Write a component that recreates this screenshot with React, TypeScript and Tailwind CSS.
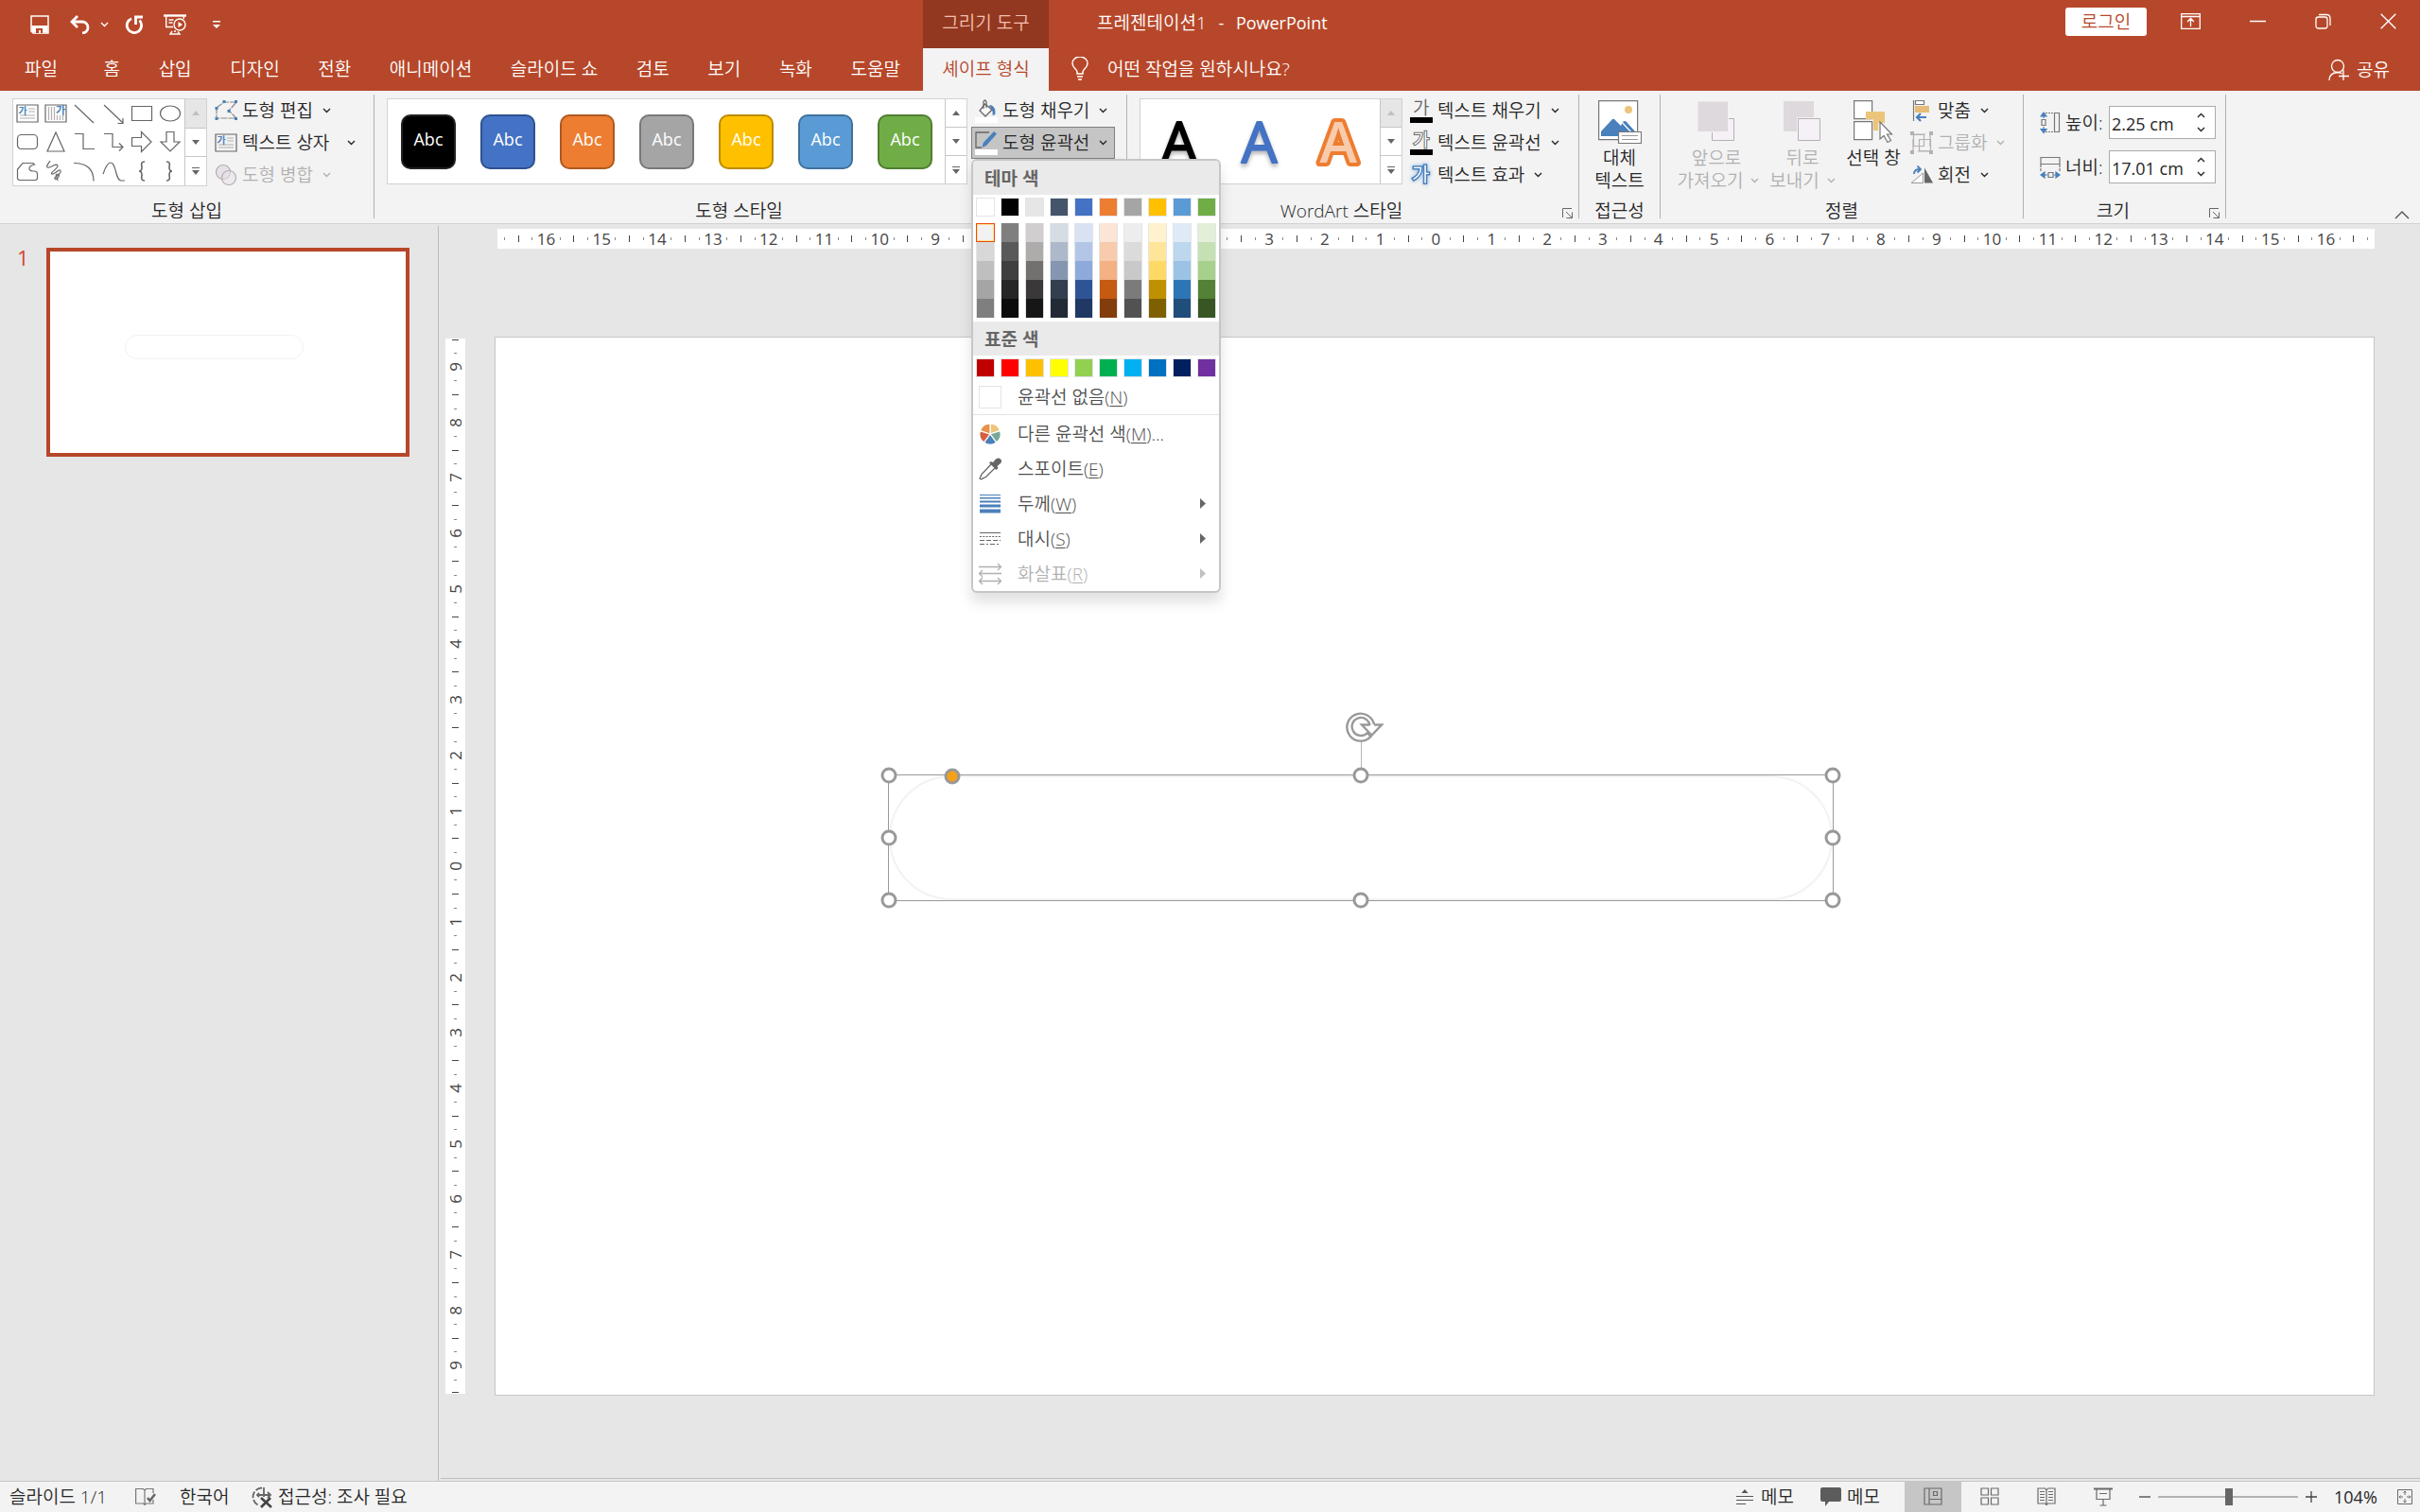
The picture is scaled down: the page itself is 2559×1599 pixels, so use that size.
import React from 'react';
import clsx from 'clsx';

type IconProps = { className?: string };

const Chevron: React.FC<IconProps> = ({ className }) => (
  <svg viewBox="0 0 9 6" className={clsx('h-[6px] w-[9px] shrink-0', className)} fill="none" stroke="currentColor" strokeWidth="1.4">
    <path d="M1 1l3.500 3.500L8 1" />
  </svg>
);

/* Quick access icons */

const SaveIcon = () => (
  <svg viewBox="0 0 20 20" className="h-5 w-5" fill="none" stroke="currentColor" strokeWidth="1.5">
    <path d="M1 1h18v18H3l-2-2z" />
    <path d="M1.5 11h17v7.5H2.5l-1-1z" fill="currentColor" stroke="none" />
    <path d="M6 14h7v5h-2v-3H9v3H6z" fill="#b7472a" stroke="none" />
  </svg>
);

const UndoIcon = () => (
  <svg viewBox="0 0 22 20" className="h-5 w-[22px]" fill="none" stroke="currentColor" strokeWidth="2.8">
    <path d="M8 1L2 7l6 6" />
    <path d="M2.5 7H13a6 6 0 0 1 0 12" />
  </svg>
);

const RedoIcon = () => (
  <svg viewBox="0 0 20 20" className="h-5 w-5" fill="none" stroke="currentColor" strokeWidth="2.8">
    <path d="M15.500 5.500a7.700 7.700 0 1 1-8.500-1.800" />
    <path d="M11.500 10V2H19" />
  </svg>
);

const StartShowIcon = () => (
  <svg viewBox="0 0 24 22" className="h-[22px] w-6" fill="none" stroke="currentColor" strokeWidth="1.4">
    <path d="M0 1.500h24" strokeWidth="2.400" />
    <path d="M2.700 2v11.500H10M21.300 2v3M5.500 6h5M5.500 9h4M9 18l-2 3h10l-2-2.500M11 18h2" />
    <circle cx="17" cy="11" r="6" />
    <path d="M15.500 8v6l4.500-3z" fill="currentColor" stroke="none" />
  </svg>
);

const CustomizeIcon = () => (
  <svg viewBox="0 0 8 8" className="h-2 w-2" fill="currentColor">
    <path d="M0 0h8v1.500H0zM0 4h8L4 8z" />
  </svg>
);

/* Shape gallery icons, all drawn on a 24px grid */

const shapeIcons: React.ReactNode[] = [
  <>
    <path d="M1 3h22v18H1z" />
    <path d="M13 7h7M13 10h7M4 14h16M4 17h16" stroke="#b0b0b0" />
    <text x="2.500" y="12.500" fontSize="10" fontWeight="700" fill="#4a80bb" stroke="none">가</text>
  </>,
  <>
    <path d="M1 3h22v18H1z" />
    <path d="M4.500 5v14M7.500 5v14M10.500 5v14M13.500 14v5M16.500 14v5M19.500 14v5" stroke="#b0b0b0" />
    <text x="12" y="12.500" fontSize="11" fontWeight="700" fill="#4a80bb" stroke="none">가</text>
  </>,
  <path d="M2 3l20 19" />,
  <path d="M2 3l20 19M22 17v5.500h-5.500" />,
  <path d="M1.500 4.500h21v15h-21z" />,
  <ellipse cx="12" cy="12" rx="10.500" ry="8" />,
  <rect x="1.500" y="4.500" width="21" height="15" rx="4" />,
  <path d="M12 2l9 20H3z" />,
  <path d="M2 3.500h9v16h12" />,
  <path d="M2 3.500h9v14h11M18 13.500l4 4-4 4" />,
  <path d="M1.500 7.500h10v-6L22 12 11.500 22.500v-6h-10z" />,
  <path d="M8 1.500h8V12h6L12 22 2 12h6z" />,
  <path d="M7 3.500h11l1.500 1.500c-7 1-7 7-2 7h2q3 0 3 3v5l-1.500 1.500H3l-1.500-1.500V10z" />,
  <path d="M6 1c-2 3-6 8-1 7s7-5 9-2c1 3-9 8-6 9s8-7 9-3-8 6-6 8 7-5 3-5 0 4 0 7" />,
  <path d="M1 3.500c13 0 21 6 21 19" />,
  <path d="M1 15C4 6 6 3 9 3c6 0 5 19 11 19h4" />,
  <path d="M15 2c-5 0-3 4-3 6s0 4-3 4c3 0 3 2 3 4s-2 6 3 6" strokeWidth="1.600" />,
  <path d="M8 2c5 0 3 4 3 6s0 4 3 4c-3 0-3 2-3 4s2 6-3 6" strokeWidth="1.600" />,
];

/* Ribbon icons */

const EditShapeIcon = () => (
  <svg viewBox="0 0 24 22" className="h-[22px] w-6" fill="none" stroke="#8c8c8c" strokeWidth="1.200">
    <path d="M2 8l8-6h13l-8 9 8 8H2z" strokeDasharray="7 1" />
    <path d="M8.500 0h3v3h-3zM21 0h3v3h-3zM0.500 7h3v3h-3zM13.500 10h3v3h-3zM0.500 18h3v3h-3zM21 18h3v3h-3z" fill="#4a80bb" stroke="none" />
  </svg>
);

const TextBoxIcon = () => (
  <svg viewBox="0 0 24 24" className="h-6 w-6 overflow-visible" fill="none" stroke="#666" strokeWidth="1.200">
    {shapeIcons[0]}
  </svg>
);

const MergeIcon = () => (
  <svg viewBox="0 0 24 24" className="h-6 w-6" fill="#e8e2e8" stroke="#b5adb5" strokeWidth="1.200">
    <circle cx="9" cy="9" r="7.500" />
    <circle cx="15" cy="15" r="7.500" fillOpacity="0.500" />
  </svg>
);

const FillIcon = () => (
  <svg viewBox="0 0 24 26" className="h-[26px] w-6" fill="none" stroke="#666" strokeWidth="1.300">
    <path d="M0 20h24v6H0z" fill="#fff" stroke="none" />
    <path d="M17 7q5 2 4.500 10l-3 1q1-7-4-10z" fill="#4a80bb" stroke="none" />
    <path d="M10.500 6L18 12l-7 7-6-6z" fill="#f8f8f8" />
    <path d="M9 11V3.500q1.500-3 3 0V10" />
  </svg>
);

const OutlineIcon = () => (
  <svg viewBox="0 0 24 26" className="h-[26px] w-6" fill="none" stroke="#666" strokeWidth="1.300">
    <path d="M0 20h24v6H0z" fill="#fff" stroke="none" />
    <path d="M15 2H1v16h6" />
    <path d="M20 1l3 2.500L12 16l-4.500 2 1.200-5z" fill="#4a80bb" stroke="none" />
  </svg>
);

const TextFillIcon = () => (
  <svg viewBox="0 0 24 26" className="h-[26px] w-6 overflow-visible">
    <text x="3" y="17" fontSize="19" fill="#666">가</text>
    <path d="M0 20h24v6H0z" />
  </svg>
);

const TextOutlineIcon = () => (
  <svg viewBox="0 0 24 26" className="h-[26px] w-6 overflow-visible">
    <text x="3" y="17" fontSize="19" fill="#fff" stroke="#666" strokeWidth="2" paintOrder="stroke">가</text>
    <path d="M0 20h24v6H0z" />
  </svg>
);

const TextEffectIcon = () => (
  <svg viewBox="0 0 24 26" className="h-[26px] w-6 overflow-visible">
    <text x="2" y="20" fontSize="20" fill="#fff" stroke="#4a80bb" strokeWidth="3" paintOrder="stroke" className="drop-shadow-[0_0_2px_#8ab4e0]">가</text>
  </svg>
);

const AltTextIcon = () => (
  <svg viewBox="0 0 46 46" className="h-[46px] w-[46px]" fill="#fff" stroke="#777" strokeWidth="1.200">
    <path d="M.6.6h41v41H.6z" />
    <circle cx="32" cy="10" r="4" fill="#ecc57b" stroke="none" />
    <path d="M3 38V33L15 20q1-.5 2 0l7 7 2-4q2-2 4 0l9 10v5z" fill="#4a80bb" stroke="none" />
    <path d="M23 21l12 13" stroke="#fff" />
    <path d="M21.500 33.500h24v12h-24z" />
    <path d="M25 37.500h17M25 41.500h17" stroke="#999" />
  </svg>
);

const BringForwardIcon = () => (
  <svg viewBox="0 0 40 43" className="h-[43px] w-10" fill="#f5f1f7" stroke="#b5b0b5">
    <path d="M15.500 18.500h23v23h-23z" />
    <path d="M0 0h32.500v32.500H0z" fill="#ddd9dd" stroke="#f3f3f3" />
  </svg>
);

const SendBackwardIcon = () => (
  <svg viewBox="0 0 40 43" className="h-[43px] w-10" fill="#f5f1f7" stroke="#b5b0b5">
    <path d="M0 0h32v32H0z" fill="#ddd9dd" stroke="none" />
    <path d="M14 17h26v26H14z" fill="#f3f3f3" stroke="none" />
    <path d="M15.500 18.500h23v23h-23z" />
  </svg>
);

const SelectionPaneIcon = () => (
  <svg viewBox="0 0 42 46" className="h-[46px] w-[42px]" fill="#fff" stroke="#777" strokeWidth="1.200">
    <path d="M.6.6h19v19H.6zM.6 22.600h19v19H.6z" />
    <path d="M13 12h20v12h-7v8h-5V20h-8z" fill="#ecc57b" stroke="none" />
    <path d="M28 23v18l4-3.500 4 7 3.500-2-4-6.500h5z" />
  </svg>
);

const AlignIcon = () => (
  <svg viewBox="0 0 24 24" className="h-6 w-6" fill="none" stroke="#777" strokeWidth="1.200">
    <path d="M3.500 1v22" />
    <path d="M5.500 1.500h9v4h-9z" fill="#fff" />
    <path d="M5 7h15v7H5z" fill="#e6bd78" stroke="none" />
    <path d="M17 19H7M11 15l-4 4 4 4" stroke="#4a80bb" strokeWidth="2.200" />
  </svg>
);

const GroupIcon = () => (
  <svg viewBox="0 0 24 24" className="h-6 w-6" fill="none" stroke="#b5b0b5" strokeWidth="1.200">
    <path d="M3 3h18v18H3z" strokeDasharray="13 5" />
    <path d="M3.500 3.500h11v12h-11zM9.500 8.500h12v12h-12z" />
    <path d="M0 0h4v4H0zM20 0h4v4h-4zM0 20h4v4H0zM20 20h4v4h-4z" fill="#b5b0b5" stroke="none" />
  </svg>
);

const RotateIcon = () => (
  <svg viewBox="0 0 24 20" className="h-5 w-6" fill="none" stroke="#999">
    <path d="M13.500 8v10.500H1z" fill="#fff" />
    <path d="M15 2.500v16h9z" fill="#666" stroke="none" />
    <path d="M4 9q0-5 6-5M7.500.5l3.500 3.500-3.500 3.500" stroke="#4a80bb" strokeWidth="1.800" />
  </svg>
);

const HeightIcon = () => (
  <svg viewBox="0 0 22 24" className="h-6 w-[22px]" fill="none" stroke="#777" strokeWidth="1.200">
    <path d="M15.500 1.500h5v20h-5zM2 8.500h4v6H2z" />
    <path d="M6 1.500h9M6 21.500h9" strokeDasharray="2 1" />
    <path d="M4 7V2M1 5l3-4 3 4zM4 16v5M1 18.500l3 4 3-4z" stroke="#4a80bb" fill="#4a80bb" />
  </svg>
);

const WidthIcon = () => (
  <svg viewBox="0 0 22 24" className="h-6 w-[22px]" fill="none" stroke="#777" strokeWidth="1.200">
    <path d="M1 1.500h20v7H1zM9 17.500h5v5H9z" />
    <path d="M1 9v8M21 9v8" strokeDasharray="3 1" />
    <path d="M8 20H3M5 17l-4 3 4 3zM15 20h4M17 17l4 3-4 3z" stroke="#4a80bb" fill="#4a80bb" />
  </svg>
);

const LauncherIcon = () => (
  <svg viewBox="0 0 11 11" className="h-[11px] w-[11px]" fill="none" stroke="#666">
    <path d="M.5 10V.5H10M4 4l6 6M10.500 4.500v6h-6" />
  </svg>
);

/* Outline menu icons */

const MoreColorsIcon = () => (
  <svg viewBox="-12 -12 24 24" className="h-6 w-6" stroke="#fff" strokeWidth="1.200">
    <path d="M0 0V-11A11 11 0 0 1 10.500-3.400z" fill="#ecc57b" />
    <path d="M0 0L10.500-3.400A11 11 0 0 1 6.500 8.900z" fill="#76a797" />
    <path d="M0 0L6.500 8.900A11 11 0 0 1-6.500 8.900z" fill="#4a80bb" />
    <path d="M0 0L-6.500 8.900A11 11 0 0 1-10.500-3.400z" fill="#d65f41" />
    <path d="M0 0L-10.500-3.400A11 11 0 0 1 0-11z" fill="#e8924a" />
  </svg>
);

const EyedropperIcon = () => (
  <svg viewBox="0 0 24 24" className="h-6 w-6" fill="none" stroke="#666" strokeWidth="1.300">
    <path d="M13 7L3 17.500Q2 20 1 22q1 1.500 3 0 2-.5 4-2L17.500 10.500" />
    <path d="M11 5.500l2-1.500 2 1 3-3.500q3-2 5 0t0 4.500L19.500 9l1 2-2 2z" fill="#666" stroke="none" />
  </svg>
);

const WeightIcon = () => (
  <svg viewBox="0 0 24 24" className="h-6 w-6" fill="#4a80bb">
    <path d="M1 2h22v1H1zM1 5h22v1.500H1zM1 8.500h22v2H1zM1 12.500h22v3H1zM1 17.500h22v4H1z" />
  </svg>
);

const DashIcon = () => (
  <svg viewBox="0 0 24 24" className="h-6 w-6" stroke="#666">
    <path d="M1 5.500h22" />
    <path d="M1 9.500h22" strokeDasharray="2 1.300" />
    <path d="M1 13.500h22" strokeDasharray="5 2" />
    <path d="M1 17.500h22" strokeDasharray="5 2 2 2" />
  </svg>
);

const ArrowsIcon = () => (
  <svg viewBox="0 0 24 24" className="h-6 w-6" fill="none" stroke="#b0b0b0" strokeWidth="1.300">
    <path d="M0 4.500h23M20 1l3.500 3.500L20 8M24 11.500H1M4 8L.5 11.500 4 15M1 19.500h22M4 16L.5 19.500 4 23M20 16l3.500 3.500L20 23" />
  </svg>
);

const NoOutlineIcon = () => <span className="block h-6 w-6 border border-[#e2e4e7] bg-white" />;

const tabs = ['홈', '삽입', '디자인', '전환', '애니메이션', '슬라이드 쇼', '검토', '보기', '녹화', '도움말'];

const shapeStyles = [
  'bg-black border-[#222222]',
  'bg-[#4472c4] border-[#2f528f]',
  'bg-[#ed7d31] border-[#ae5a21]',
  'bg-[#a5a5a5] border-[#787878]',
  'bg-[#ffc000] border-[#bc8c00]',
  'bg-[#5b9bd5] border-[#41719c]',
  'bg-[#70ad47] border-[#507e32]',
];

const themeColors = [
  { base: 'bg-white', shades: ['bg-[#f2f2f2]', 'bg-[#d8d8d8]', 'bg-[#bfbfbf]', 'bg-[#a5a5a5]', 'bg-[#7f7f7f]'] },
  { base: 'bg-black', shades: ['bg-[#7f7f7f]', 'bg-[#595959]', 'bg-[#3f3f3f]', 'bg-[#262626]', 'bg-[#0c0c0c]'] },
  { base: 'bg-[#e7e6e6]', shades: ['bg-[#d0cece]', 'bg-[#aeabab]', 'bg-[#757070]', 'bg-[#3a3838]', 'bg-[#171616]'] },
  { base: 'bg-[#44546a]', shades: ['bg-[#d6dce4]', 'bg-[#adb9ca]', 'bg-[#8496b0]', 'bg-[#323f4f]', 'bg-[#222a35]'] },
  { base: 'bg-[#4472c4]', shades: ['bg-[#d9e2f3]', 'bg-[#b4c6e7]', 'bg-[#8eaadb]', 'bg-[#2f5496]', 'bg-[#1f3864]'] },
  { base: 'bg-[#ed7d31]', shades: ['bg-[#fbe5d5]', 'bg-[#f7cbac]', 'bg-[#f4b183]', 'bg-[#c55a11]', 'bg-[#833c0b]'] },
  { base: 'bg-[#a5a5a5]', shades: ['bg-[#ededed]', 'bg-[#dbdbdb]', 'bg-[#c9c9c9]', 'bg-[#7b7b7b]', 'bg-[#525252]'] },
  { base: 'bg-[#ffc000]', shades: ['bg-[#fff2cc]', 'bg-[#fee599]', 'bg-[#ffd965]', 'bg-[#bf9000]', 'bg-[#7f6000]'] },
  { base: 'bg-[#5b9bd5]', shades: ['bg-[#deebf6]', 'bg-[#bdd7ee]', 'bg-[#9cc3e5]', 'bg-[#2e75b5]', 'bg-[#1e4e79]'] },
  { base: 'bg-[#70ad47]', shades: ['bg-[#e2efd9]', 'bg-[#c5e0b3]', 'bg-[#a8d08d]', 'bg-[#538135]', 'bg-[#375623]'] },
];

const standardColors = [
  'bg-[#c00000]', 'bg-[#ff0000]', 'bg-[#ffc000]', 'bg-[#ffff00]', 'bg-[#92d050]',
  'bg-[#00b050]', 'bg-[#00b0f0]', 'bg-[#0070c0]', 'bg-[#002060]', 'bg-[#7030a0]',
];

const menuItems = [
  { icon: MoreColorsIcon, label: '다른 윤곽선 색', accel: 'M', more: true },
  { icon: EyedropperIcon, label: '스포이트', accel: 'E' },
  { icon: WeightIcon, label: '두께', accel: 'W', sub: true },
  { icon: DashIcon, label: '대시', accel: 'S', sub: true },
  { icon: ArrowsIcon, label: '화살표', accel: 'R', sub: true, disabled: true },
];

const TitleBar = () => (
  <div className="flex h-[51px] items-center text-white">
    <div className="flex h-full w-[976px] shrink-0 items-center pl-8">
      <button aria-label="저장" className="mr-[22px]"><SaveIcon /></button>
      <button aria-label="실행 취소" className="mr-[10px]"><UndoIcon /></button>
      <button aria-label="실행 취소 목록" className="mr-[17px]"><Chevron /></button>
      <button aria-label="다시 실행" className="mr-[21px]"><RedoIcon /></button>
      <button aria-label="처음부터 시작" className="mr-7"><StartShowIcon /></button>
      <button aria-label="빠른 실행 도구 모음 사용자 지정"><CustomizeIcon /></button>
    </div>
    <div className="flex h-full w-[133px] shrink-0 items-center justify-center bg-[#923820] pb-1 text-[#f5bfae]">그리기 도구</div>
    <h1 className="flex-1 pb-1 pl-[51px]">
      프레젠테이션1<span className="text-[18px] font-normal"> <span className="px-2">-</span> PowerPoint</span>
    </h1>
    <button className="mr-[36px] mb-[6px] h-[30px] w-[86px] rounded-[3px] bg-white text-[#b7472a]">로그인</button>
    <div className="mb-[6px] flex items-center gap-[52px] pr-[25px]">
      <button aria-label="리본 메뉴 표시 옵션">
        <svg viewBox="0 0 21 17" className="h-[17px] w-[21px]" fill="none" stroke="currentColor" strokeWidth="1.300">
          <path d="M.7.7h19.600v15.600H.7zM.7 3.500h19.600M10.500 14V6M7 9l3.500-3.500L14 9" />
        </svg>
      </button>
      <button aria-label="최소화">
        <svg viewBox="0 0 17 17" className="h-[17px] w-[17px]" stroke="currentColor" strokeWidth="1.500"><path d="M0 8.500h17" /></svg>
      </button>
      <button aria-label="이전 크기로 복원">
        <svg viewBox="0 0 17 17" className="h-[17px] w-[17px]" fill="none" stroke="currentColor" strokeWidth="1.300">
          <rect x="1" y="4" width="12" height="12" rx="2.500" />
          <path d="M4 1.500h8q4 0 4 4V13" />
        </svg>
      </button>
      <button aria-label="닫기">
        <svg viewBox="0 0 17 17" className="h-[17px] w-[17px]" stroke="currentColor" strokeWidth="1.400"><path d="M.7.7l15.600 15.600M16.300.7L.7 16.300" /></svg>
      </button>
    </div>
  </div>
);

const TabRow = () => (
  <nav className="flex h-[45px] items-stretch text-white">
    <div className="flex w-[976px] shrink-0 justify-between pr-1 pb-[2px]">
      <button className="pr-7 pl-[26px]">파일</button>
      {tabs.map((tab) => (
        <button key={tab} className="px-5 whitespace-nowrap">{tab}</button>
      ))}
    </div>
    <button className="w-[133px] shrink-0 bg-[#f3f3f3] pb-[2px] text-[#b7472a]">셰이프 형식</button>
    <button className="flex items-center pb-[2px] pl-6">
      <svg viewBox="0 0 18 25" className="mr-5 h-[25px] w-[18px]" fill="none" stroke="currentColor" strokeWidth="1.500">
        <path d="M6 18v-2c0-3-5-4-5-9a8 7 0 0 1 16 0c0 5-5 6-5 9v2zM6 21h6M7 24h4" />
      </svg>
      어떤 작업을 원하시나요?
    </button>
    <button className="ml-auto flex items-center gap-2 pr-8">
      <svg viewBox="0 0 22 24" className="h-6 w-[22px]" fill="none" stroke="currentColor" strokeWidth="1.300">
        <circle cx="10" cy="8" r="6.500" />
        <path d="M1 23q0-8 9-8.500 3 0 4.500 1.500M16 12v11M11 18.500h11" />
      </svg>
      공유
    </button>
  </nav>
);

interface GroupProps {
  label: string;
  width: string;
  launcher?: boolean;
  children: React.ReactNode;
}

const Group: React.FC<GroupProps> = ({ label, width, launcher, children }) => (
  <section className={clsx('flex h-[131px] shrink-0 flex-col border-r border-[#b1b1b1]', width)}>
    <div className="flex h-[115px]">{children}</div>
    <div className="flex h-4 items-end">
      <h2 className="flex-1 text-center leading-4">{label}</h2>
      {launcher && (
        <button aria-label={`${label} 대화 상자`} className="mr-[6px] ml-[7px]"><LauncherIcon /></button>
      )}
    </div>
  </section>
);

const GalleryScroll: React.FC<{ topDisabled?: boolean }> = ({ topDisabled }) => (
  <div className="flex w-[23px] flex-col divide-y divide-[#c6c6c6] border-l border-[#c6c6c6] text-[#666]">
    <button aria-label="위로" className={clsx('flex flex-1 items-center justify-center', topDisabled && 'bg-[#e6e6e6] text-[#c0c0c0]')}>
      <svg viewBox="0 0 8 5" className="h-[5px] w-2" fill="currentColor"><path d="M0 5l4-5 4 5z" /></svg>
    </button>
    <button aria-label="아래로" className="flex flex-1 items-center justify-center">
      <svg viewBox="0 0 8 5" className="h-[5px] w-2" fill="currentColor"><path d="M0 0l4 5 4-5z" /></svg>
    </button>
    <button aria-label="자세히" className="flex flex-1 items-center justify-center">
      <svg viewBox="0 0 8 8" className="h-2 w-2" fill="currentColor"><path d="M0 0h8v1H0zM0 3l4 5 4-5z" /></svg>
    </button>
  </div>
);

interface RibbonButtonProps {
  icon: React.ReactNode;
  label: string;
  active?: boolean;
  disabled?: boolean;
  wide?: boolean;
}

const RibbonButton: React.FC<RibbonButtonProps> = ({ icon, label, active, disabled, wide }) => (
  <button
    disabled={disabled}
    className={clsx(
      'flex h-[34px] items-center gap-[5px] border pr-[7px] pl-[3px] whitespace-nowrap',
      active ? 'border-[#7f7f7f] bg-[#c5c5c5]' : 'border-transparent',
      disabled && 'text-[#b1b1b1]'
    )}
  >
    {icon}
    {label}
    <Chevron className={wide ? 'ml-[14px]' : 'ml-[5px]'} />
  </button>
);

const Swatch: React.FC<{ color: string }> = ({ color }) => (
  <button aria-label="색" className={clsx('h-5 w-5 border border-[#e2e4e7]', color)} />
);

const OutlineMenu = () => (
  <div className="absolute top-full left-0 w-[264px] overflow-hidden rounded-md border-2 border-[#c6c6c6] bg-white text-[#505050] shadow-[0_10px_14px_rgba(0,0,0,0.12)]">
    <h3 className="flex h-9 items-center bg-[#eaeaea] pt-[2px] pl-3 font-bold text-[#666]">테마 색</h3>
    <div className="flex justify-between px-[3px] pt-[3px]">
      {themeColors.map(({ base }) => <Swatch key={base} color={base} />)}
    </div>
    <div className="flex justify-between px-[3px] pt-[7px] pb-1">
      {themeColors.map(({ base, shades }, column) => (
        <div key={base} className="flex flex-col">
          {shades.map((shade, row) => (
            <button
              key={shade}
              aria-label="음영"
              className={clsx(
                'h-5 w-5',
                shade,
                column === 0 && row === 0 ? 'border border-[#ee4b11] ring-1 ring-[#ffe294] ring-inset' : 'border-x border-[#e2e4e7]'
              )}
            />
          ))}
        </div>
      ))}
    </div>
    <h3 className="flex h-9 items-center bg-[#eaeaea] pt-[2px] pl-3 font-bold text-[#666]">표준 색</h3>
    <div className="flex justify-between px-[3px] pt-[3px]">
      {standardColors.map((color) => <Swatch key={color} color={color} />)}
    </div>
    <button className="flex h-10 w-full items-center gap-[17px] border-b border-[#e2e4e7] pt-[3px] pl-[6px]">
      <NoOutlineIcon />
      <span>윤곽선 없음(<u className="underline-offset-2">N</u>)</span>
    </button>
    <div className="pt-px">
      {menuItems.map(({ icon: Icon, label, accel, more, sub, disabled }) => (
        <button key={label} disabled={disabled} className={clsx('flex h-[37px] w-full items-center pr-[14px] pl-[6px]', disabled && 'text-[#b1b1b1]')}>
          <Icon />
          <span className="ml-[17px]">
            {label}(<u className="underline-offset-2">{accel}</u>){more && '...'}
          </span>
          {sub && <svg viewBox="0 0 6 11" className="ml-auto h-[11px] w-[6px]" fill={disabled ? '#c0c0c0' : '#666'}><path d="M0 0l6 5.500L0 11z" /></svg>}
        </button>
      ))}
    </div>
  </div>
);

const SizeField: React.FC<{ id: string; label: string; value: string; icon: React.ReactNode }> = ({ id, label, value, icon }) => (
  <div className="flex items-center">
    {icon}
    <label htmlFor={id} className="ml-[5px] w-[46px] whitespace-nowrap">{label}</label>
    <div className="flex h-[35px] w-[113px] border border-[#ababab] bg-white">
      <input id={id} defaultValue={value} className="w-[88px] bg-transparent pt-[2px] pl-[2px] text-[18px] font-normal outline-none" />
      <div className="flex flex-col justify-center gap-[9px] pl-1">
        <button aria-label="늘리기"><Chevron className="rotate-180" /></button>
        <button aria-label="줄이기"><Chevron /></button>
      </div>
    </div>
  </div>
);

const Ribbon = () => (
  <div className="relative z-10 flex h-[141px] border-b border-[#d2d2d2] bg-[#f3f3f3] pt-1 text-[#262626]">
    <Group label="도형 삽입" width="w-[396px]">
      <div className="mt-1 ml-[13px] flex h-[93px] w-[206px] border border-[#d2d2d2] bg-white">
        <div className="grid flex-1 grid-cols-6 grid-rows-3">
          {shapeIcons.map((shape, i) => (
            <button key={i} aria-label="도형" className="flex items-center justify-center">
              <svg viewBox="0 0 24 24" className="h-6 w-6 overflow-visible" fill="none" stroke="#666" strokeWidth="1.200">{shape}</svg>
            </button>
          ))}
        </div>
        <GalleryScroll topDisabled />
      </div>
      <div className="ml-1 flex flex-col items-start">
        <RibbonButton icon={<EditShapeIcon />} label="도형 편집" />
        <RibbonButton icon={<TextBoxIcon />} label="텍스트 상자" wide />
        <RibbonButton icon={<MergeIcon />} label="도형 병합" disabled />
      </div>
    </Group>

    <Group label="도형 스타일" width="w-[796px]" launcher>
      <div className="mt-1 ml-[13px] flex h-[91px] w-[614px] justify-between border border-[#d2d2d2] bg-white">
        <div className="flex items-center gap-[26px] pl-[14px]">
          {shapeStyles.map((style) => (
            <button key={style} className={clsx('h-[58px] w-[58px] rounded-[10px] border-2 pb-[6px] text-[18px] font-normal text-white', style)}>Abc</button>
          ))}
        </div>
        <GalleryScroll />
      </div>
      <div className="ml-1 flex flex-col">
        <RibbonButton icon={<FillIcon />} label="도형 채우기" />
        <div className="relative">
          <RibbonButton icon={<OutlineIcon />} label="도형 윤곽선" active />
          <OutlineMenu />
        </div>
      </div>
    </Group>

    <Group label="WordArt 스타일" width="w-[478px]" launcher>
      <div className="mt-1 ml-[13px] flex h-[91px] w-[278px] justify-between border border-[#d2d2d2] bg-white">
        <svg viewBox="0 0 254 89" className="h-[89px] w-[254px]" fontSize="60" fontWeight="400" textAnchor="middle" strokeLinejoin="round">
          <g className="drop-shadow-[0_3px_2px_rgba(0,0,0,0.3)]">
            <text x="41" y="67" stroke="#000" strokeWidth="2">A</text>
            <text x="126" y="67" fill="#4472c4" stroke="#4472c4" strokeWidth="2">A</text>
          </g>
          <text x="210" y="67" fontWeight="600" fill="#f8cbad" stroke="#ed7d31" strokeWidth="8" paintOrder="stroke">A</text>
        </svg>
        <GalleryScroll topDisabled />
      </div>
      <div className="ml-1 flex flex-col items-start">
        <RibbonButton icon={<TextFillIcon />} label="텍스트 채우기" />
        <RibbonButton icon={<TextOutlineIcon />} label="텍스트 윤곽선" />
        <RibbonButton icon={<TextEffectIcon />} label="텍스트 효과" />
      </div>
    </Group>

    <Group label="접근성" width="w-[86px]">
      <button className="flex w-full flex-col items-center pt-[6px]">
        <AltTextIcon />
        <span className="mt-[3px]">대체<br />텍스트</span>
      </button>
    </Group>

    <Group label="정렬" width="w-[384px]">
      <button disabled className="flex w-[118px] flex-col items-center pt-[7px] text-[#b1b1b1]">
        <BringForwardIcon />
        <span className="mt-[5px]">앞으로</span>
        <span className="flex items-center gap-2 pl-1">가져오기 <Chevron /></span>
      </button>
      <button disabled className="flex w-[64px] flex-col items-center pt-[7px] text-[#b1b1b1]">
        <SendBackwardIcon />
        <span className="mt-[5px]">뒤로</span>
        <span className="flex items-center gap-2 whitespace-nowrap">보내기 <Chevron /></span>
      </button>
      <button className="flex w-[78px] flex-col items-center pt-[6px] pl-2">
        <SelectionPaneIcon />
        <span className="mt-[3px] whitespace-nowrap">선택 창</span>
      </button>
      <div className="flex flex-col items-start">
        <RibbonButton icon={<AlignIcon />} label="맞춤" />
        <RibbonButton icon={<GroupIcon />} label="그룹화" disabled />
        <RibbonButton icon={<RotateIcon />} label="회전" />
      </div>
    </Group>

    <Group label="크기" width="w-[214px]" launcher>
      <div className="flex flex-col gap-3 pt-3 pl-[17px]">
        <SizeField id="shape-height" label="높이:" value="2.25 cm" icon={<HeightIcon />} />
        <SizeField id="shape-width" label="너비:" value="17.01 cm" icon={<WidthIcon />} />
      </div>
    </Group>

    <button aria-label="리본 메뉴 축소" className="mt-auto mr-[11px] mb-1 ml-auto">
      <svg viewBox="0 0 16 9" className="h-[9px] w-4" fill="none" stroke="#555" strokeWidth="1.400"><path d="M1 8l7-7 7 7" /></svg>
    </button>
  </div>
);

const Thumbnails = () => (
  <aside className="flex w-[463px] shrink-0 items-start pt-[25px]">
    <span className="w-[49px] pl-[18px] text-[22px] leading-5 font-normal text-[#d24726]">1</span>
    <button aria-label="슬라이드 1" className="flex h-[221px] w-[384px] border-4 border-[#b7472a] bg-white pt-[88px] pl-[79px]">
      <span className="h-[26px] w-[189px] rounded-full border border-[#f2f2f2]" />
    </button>
  </aside>
);

// One slot per quarter centimetre, from -count to +count
const quarters = (count: number) => Array.from({ length: count * 2 + 1 }, (_, i) => i - count);

const HorizontalRuler = () => (
  <div className="mt-[3px] mr-12 ml-[62px] flex h-[21px] bg-white text-[17px] font-normal text-[#444]">
    {quarters(67).map((q) => (
      <div key={q} className="flex w-0 flex-1 items-center justify-center">
        {q % 4 === 0 ? (
          <span>{Math.abs(q / 4)}</span>
        ) : (
          <span className={clsx('w-px shrink-0', q % 2 === 0 ? 'h-[7px] bg-[#444]' : 'h-[3px] bg-[#888]')} />
        )}
      </div>
    ))}
  </div>
);

const VerticalRuler = () => (
  <div className="my-[2px] flex w-[21px] flex-col items-center bg-white text-[17px] font-normal text-[#444]">
    <div className="h-2 pt-px"><span className="block h-px w-[7px] bg-[#444]" /></div>
    {quarters(37).map((q) => (
      <div key={q} className="flex h-0 flex-1 items-center justify-center">
        {q % 4 === 0 ? (
          <span className="-rotate-90">{Math.abs(q / 4)}</span>
        ) : (
          <span className={clsx('h-px shrink-0', q % 2 === 0 ? 'w-[7px] bg-[#444]' : 'w-[3px] bg-[#888]')} />
        )}
      </div>
    ))}
    <div className="flex h-2 items-end pb-px"><span className="block h-px w-[7px] bg-[#444]" /></div>
  </div>
);

const handles = [
  'left-0 top-0', 'left-1/2 top-0', 'left-full top-0',
  'left-0 top-1/2', 'left-full top-1/2',
  'left-0 top-full', 'left-1/2 top-full', 'left-full top-full',
];

const SelectedShape = () => (
  <div className="absolute top-[462px] left-[415px] h-[134px] w-[1000px] border border-[#999]">
    <div className="h-full w-full rounded-full border-2 border-[#f2f2f2]" />
    <div className="absolute bottom-full left-1/2 h-9 w-px bg-[#b5b5b5]" />
    <svg viewBox="0 0 40 32" className="absolute -top-[67px] left-[483px] h-8 w-10" fill="none" stroke="#999" strokeWidth="2.400">
      <path d="M30 13A14.500 14.500 0 1 0 26.500 26l-3.500-4A9.500 9.500 0 1 1 25.500 14" fill="#fff" />
      <path d="M16 14h22L27 25z" fill="#fff" stroke="none" />
      <path d="M30 13.500h8L27.500 24.500 17 13.500h8.500" />
    </svg>
    {handles.map((position) => (
      <span key={position} className={clsx('absolute h-[17px] w-[17px] -translate-x-1/2 -translate-y-1/2 rounded-full border-3 border-[#999] bg-white', position)} />
    ))}
    <span className="absolute top-px left-[67px] h-[17px] w-[17px] -translate-x-1/2 -translate-y-1/2 rounded-full border-3 border-[#999] bg-[#f4a118]" />
  </div>
);

const Editor = () => (
  <main className="mt-[2px] flex flex-1 flex-col border-l border-[#bdbdbd]">
    <HorizontalRuler />
    <div className="mt-[93px] flex pr-12 pl-[7px]">
      <VerticalRuler />
      <div className="relative ml-[31px] aspect-[71/40] flex-1 border border-[#c6c6c6] bg-white">
        <SelectedShape />
      </div>
    </div>
    <div className="mt-auto mb-[2px] ml-[2px] border-b border-[#bdbdbd]" />
  </main>
);

const viewButtons = [
  { label: '기본', path: 'M1 1h18v17H1zM6 1v17M6 12.500h13M10.500 4.500h4v4h-4z' },
  { label: '여러 슬라이드', path: 'M1 1h7.500v7H1zM11.500 1H19v7h-7.500zM1 11h7.500v7H1zM11.500 11H19v7h-7.500z' },
  { label: '읽기용 보기', path: 'M10 19V3L8.500 1H1v16h7.500l1.500 1.500L11.500 17H19V1h-7.500L10 3M3 4.500h5M3 7.500h5M3 10.500h5M3 13.500h5M12 4.500h5M12 7.500h5M12 10.500h5M12 13.500h5' },
  { label: '슬라이드 쇼', path: 'M0 1h20M0 2h20M3 2v10.500h14V2M6 6.500h8M10 12.500V19M6.500 19h7' },
];

const StatusBar = () => (
  <footer className="flex h-[33px] items-center border-t border-[#c6c6c6] bg-[#f3f3f3] pl-[10px] whitespace-nowrap text-[#262626]">
    <span className="w-[133px]">슬라이드 1/1</span>
    <button aria-label="맞춤법 검사" className="w-[47px]">
      <svg viewBox="0 0 22 20" className="h-5 w-[22px]" fill="none" stroke="#777" strokeWidth="1.200">
        <path d="M10 18.500V3L8.500 1.500H.6v15.500h8l1.400 1.500 1.500-1.500H19v-4M19 6V1.500h-7.500L10 3" />
        <path d="M13 11l2.500 3L21 7" stroke="#666" strokeWidth="2.600" />
      </svg>
    </button>
    <button className="w-[76px] text-left">한국어</button>
    <button className="flex items-center gap-[5px]">
      <svg viewBox="0 0 23 23" className="h-[23px] w-[23px]" fill="none" stroke="#666" strokeWidth="1.800">
        <path d="M11 1.500A9.500 9.500 0 0 0 8 20" strokeDasharray="7 2" />
        <path d="M13 1v10M6 9h14M17 6l3 3-3 3M8 7l-2 2 2 2" />
        <path d="M10 12l11 10M20 12L10 22" strokeWidth="2.600" stroke="#444" />
      </svg>
      접근성: 조사 필요
    </button>

    <button className="ml-auto flex items-center gap-2">
      <svg viewBox="0 0 18 18" className="h-[18px] w-[18px]" fill="none" stroke="#555" strokeWidth="1.200">
        <path d="M0 8.500h18M0 12.500h18M0 16.500h10" />
        <path d="M5.500 5L9 1l3.500 4z" fill="#555" stroke="none" />
      </svg>
      메모
    </button>
    <button className="ml-7 flex items-center gap-[6px]">
      <svg viewBox="0 0 22 20" className="h-5 w-[22px]" fill="#5c5c5c">
        <path d="M2 0h18q2 0 2 2v11q0 2-2 2H9l-4 5v-5H2q-2 0-2-2V2q0-2 2-2z" />
      </svg>
      메모
    </button>
    <div className="ml-[26px] flex h-full">
      {viewButtons.map(({ label, path }, i) => (
        <button key={label} aria-label={label} className={clsx('flex w-[60px] items-center justify-center', i === 0 && 'bg-[#c6c6c6]')}>
          <svg viewBox="0 0 20 20" className="h-5 w-5" fill="none" stroke="#6a6a6a" strokeWidth="1.200"><path d={path} /></svg>
        </button>
      ))}
    </div>
    <button aria-label="축소" className="ml-2">
      <svg viewBox="0 0 12 12" className="h-3 w-3" stroke="#444" strokeWidth="1.300"><path d="M0 6h12" /></svg>
    </button>
    <input
      type="range"
      aria-label="확대/축소"
      defaultValue={51}
      className="mx-2 h-[18px] w-[148px] appearance-none bg-transparent [&::-webkit-slider-runnable-track]:h-[2px] [&::-webkit-slider-runnable-track]:bg-[#b1b1b1] [&::-webkit-slider-thumb]:-mt-2 [&::-webkit-slider-thumb]:h-[18px] [&::-webkit-slider-thumb]:w-2 [&::-webkit-slider-thumb]:appearance-none [&::-webkit-slider-thumb]:bg-[#666]"
    />
    <button aria-label="확대">
      <svg viewBox="0 0 12 12" className="h-3 w-3" stroke="#444" strokeWidth="1.300"><path d="M0 6h12M6 0v12" /></svg>
    </button>
    <button className="ml-[18px] w-[67px] text-left text-[18px] font-normal">104%</button>
    <button aria-label="창에 맞춤" className="mr-2">
      <svg viewBox="0 0 16 16" className="h-4 w-4" fill="none" stroke="#6a6a6a">
        <path d="M.5.5h15v15H.5zM8 2v4M8 10v4M2 8h4M10 8h4M6.500 3.500L8 2l1.500 1.500M6.500 12.500L8 14l1.500-1.500M3.500 6.500L2 8l1.500 1.500M12.500 6.500L14 8l-1.500 1.500" />
      </svg>
    </button>
  </footer>
);

const App: React.FC = () => {
  return (
    <div className="flex min-h-screen flex-col bg-[#e6e6e6] font-['Open_Sans','Noto_Sans_CJK_KR',sans-serif] text-[19px] leading-6 font-[350]">
      <header className="bg-[#b7472a]">
        <TitleBar />
        <TabRow />
      </header>
      <Ribbon />
      <div className="flex flex-1">
        <Thumbnails />
        <Editor />
      </div>
      <StatusBar />
    </div>
  );
};

export default App;
